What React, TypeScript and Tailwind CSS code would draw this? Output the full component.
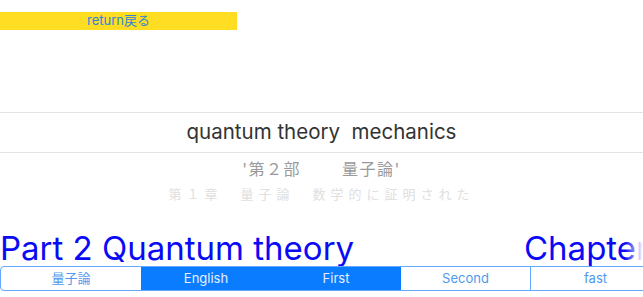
export default function App() {
  const segs = [
    { label: "量子論", w: "w-[140px]", on: false },
    { label: "English", w: "w-[130px]", on: true },
    { label: "First", w: "w-[130px]", on: true },
    { label: "Second", w: "w-[129px]", on: false },
    { label: "fast", w: "w-[130px]", on: false },
  ];

  return (
    <main
      className="w-[643px] h-[297px] overflow-hidden bg-white relative"
      style={{ fontFamily: 'Inter, "Noto Sans CJK JP", sans-serif' }}
    >
      {/* RETURN BAR */}
      <div className="pt-[12px]">
        <div className="w-[237px] h-[18px] bg-[#ffdd22] flex items-center justify-center text-[13px] text-[#2f86d8]">
          return戻る
        </div>
      </div>

      {/* TITLE */}
      <div className="mt-[82px] border-t border-b border-[#e3e3e3] h-[41px] flex items-center justify-center text-[20.5px] text-[#333] whitespace-pre">
        quantum theory  mechanics
      </div>

      <div className="mt-[6px] text-center text-[16px] tracking-[1.5px] text-[#9a9a9a] whitespace-pre leading-[20px]">
        '第２部　　 量子論'
      </div>
      <div className="mt-[6px] text-center text-[13px] tracking-[5px] text-[#e0e0e0] whitespace-pre leading-[18px]">
        第１章　量子論　数学的に証明された
      </div>

      {/* SCROLLING HEADLINE */}
      <div className="relative mt-[26px] h-[38px] overflow-hidden whitespace-nowrap flex text-[33px] leading-[38px] text-[#0a0af5]">
        <span className="w-[524px] shrink-0">Part 2 Quantum theory</span>
        <span className="shrink-0">Chapter 1</span>
        <div className="absolute right-0 top-0 h-full w-[18px] bg-gradient-to-r from-white/0 to-white"></div>
      </div>

      {/* SEGMENTED CONTROL */}
      <div className="absolute left-0 top-[266px] flex h-[25px] border border-[#62a8ff] rounded-[4px] overflow-hidden w-[660px]">
        {segs.map((s, i) => (
          <div
            key={s.label}
            className={`${s.w} shrink-0 flex items-center justify-center text-[13px] ${
              s.on ? "bg-[#0a7cff] text-[#e6f0ff]" : "text-[#4f9af0]"
            } ${i > 0 && !s.on && !segs[i - 1].on ? "border-l border-[#62a8ff]" : ""}`}
          >
            {s.label}
          </div>
        ))}
      </div>
    </main>
  );
}
